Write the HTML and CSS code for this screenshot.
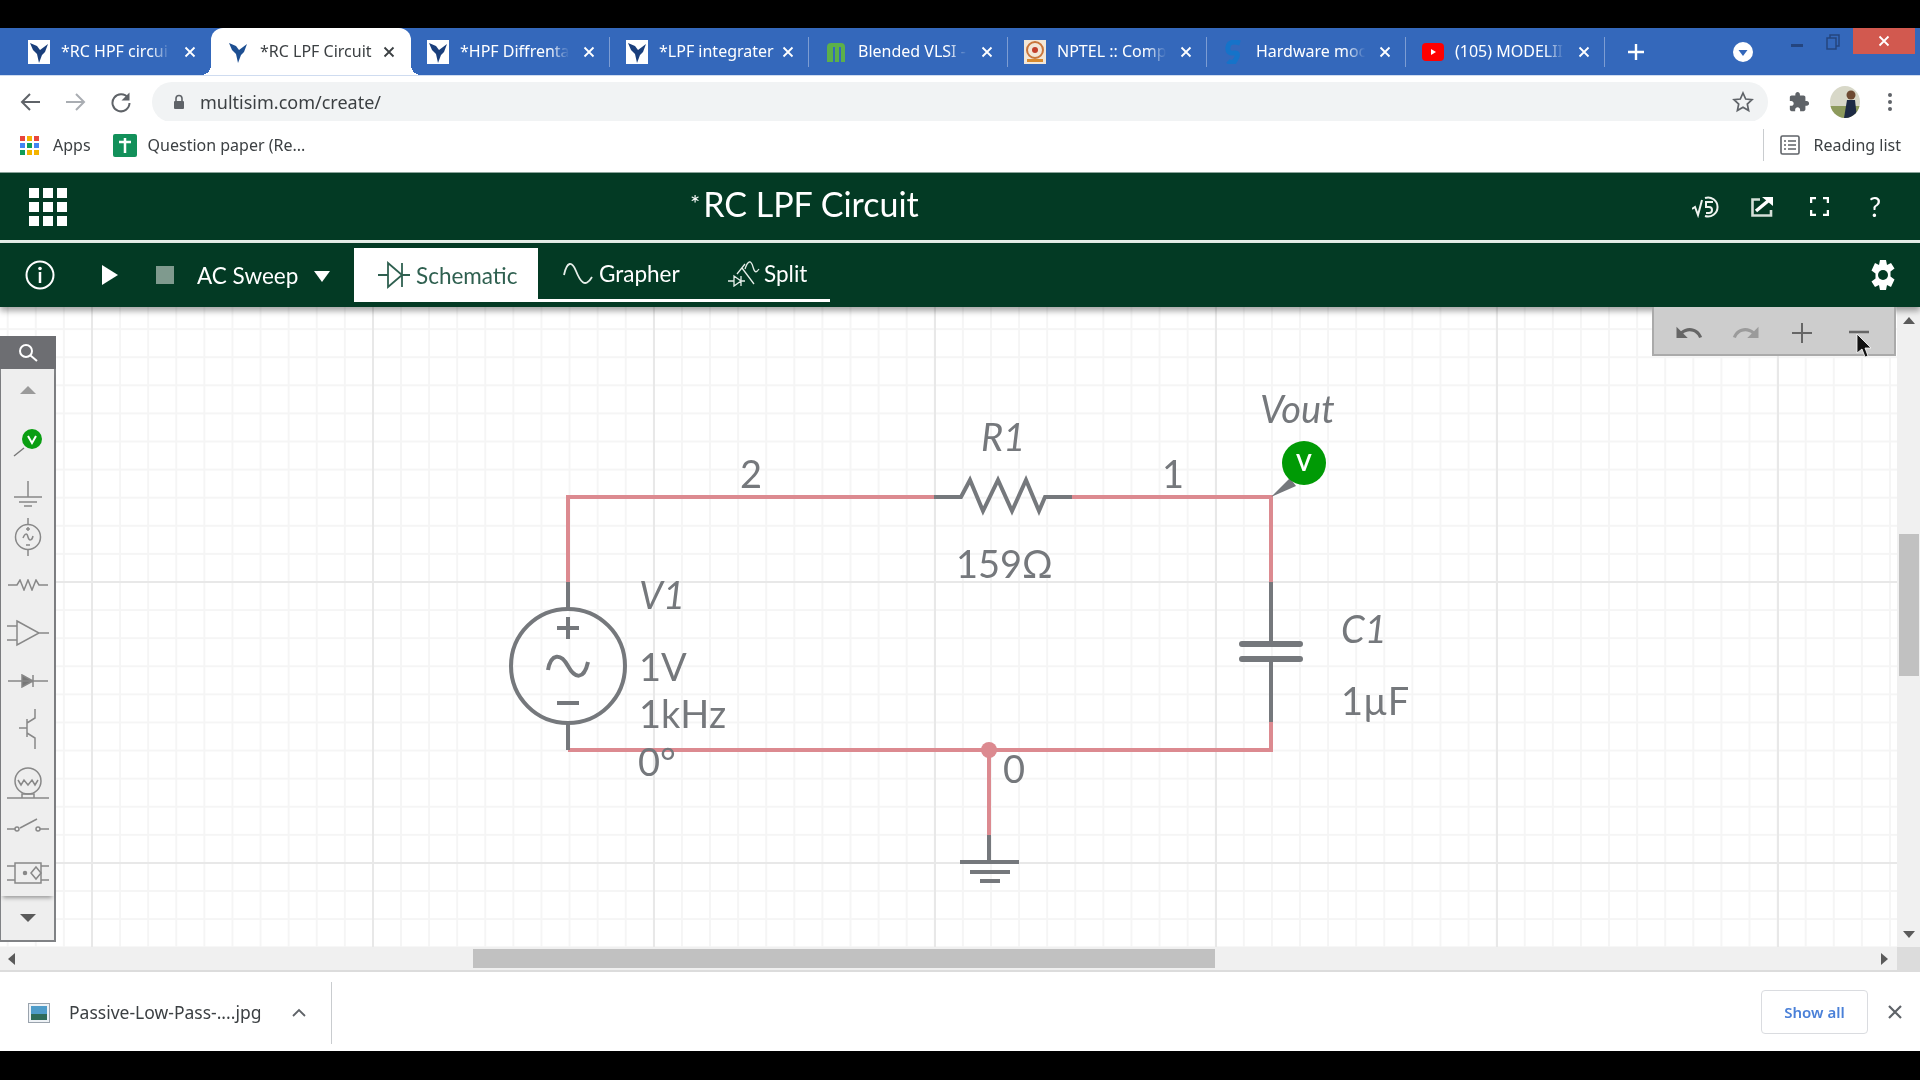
FILE: index.html
```html
<!DOCTYPE html>
<html lang="en">
<head>
  <meta charset="UTF-8" />
  <title>*RC LPF Circuit</title>
  <link rel="stylesheet" href="styles.css">
</head>
<body>
  <svg class="defs" width="0" height="0">
    <symbol id="x-mark" viewBox="0 0 12 12"><path d="M1.5 1.5l9 9M10.5 1.5l-9 9" fill="none" stroke="currentColor" stroke-width="1.8"/></symbol>
    <symbol id="ni-mark" viewBox="0 0 22 24"><path d="M2 3l7 3 3 4 8-6-3 8-3 3-3 8-2-9-4-4z" fill="currentColor"/></symbol>
  </svg>

  <div class="black-bar top"></div>

  <div class="tabstrip">
    <div class="tab">
      <span class="fav paper"><svg width="22" height="24"><use href="#ni-mark"/></svg></span>
      <span class="tab-title">*RC HPF circui</span>
      <svg class="tab-x" width="12" height="12"><use href="#x-mark"/></svg>
    </div>
    <div class="tab active">
      <span class="fav"><svg width="22" height="24"><use href="#ni-mark"/></svg></span>
      <span class="tab-title">*RC LPF Circuit</span>
      <svg class="tab-x" width="12" height="12"><use href="#x-mark"/></svg>
    </div>
    <div class="tab sep">
      <span class="fav paper"><svg width="22" height="24"><use href="#ni-mark"/></svg></span>
      <span class="tab-title">*HPF Diffrenta</span>
      <svg class="tab-x" width="12" height="12"><use href="#x-mark"/></svg>
    </div>
    <div class="tab sep">
      <span class="fav paper"><svg width="22" height="24"><use href="#ni-mark"/></svg></span>
      <span class="tab-title solid">*LPF integrater</span>
      <svg class="tab-x" width="12" height="12"><use href="#x-mark"/></svg>
    </div>
    <div class="tab sep">
      <span class="fav"><svg width="22" height="22" viewBox="0 0 22 22"><path d="M2 21V6q0-4 4-4h10q4 0 4 4v15h-4V6h-2v15h-4V6H8v15z" fill="#5cb04a"/></svg></span>
      <span class="tab-title">Blended VLSI -</span>
      <svg class="tab-x" width="12" height="12"><use href="#x-mark"/></svg>
    </div>
    <div class="tab sep">
      <span class="fav"><svg width="22" height="24" viewBox="0 0 22 24"><rect width="22" height="24" fill="#f3e7d8"/><circle cx="11" cy="10" r="8" fill="none" stroke="#c9763c" stroke-width="2"/><circle cx="11" cy="10" r="3" fill="#c2402c"/><rect x="3" y="19" width="16" height="3" fill="#d88a2e"/></svg></span>
      <span class="tab-title">NPTEL :: Comp</span>
      <svg class="tab-x" width="12" height="12"><use href="#x-mark"/></svg>
    </div>
    <div class="tab sep">
      <span class="fav"><svg width="18" height="24" viewBox="0 0 18 24"><path d="M15 3Q4 0 3 7t6 6 0 9Q5 23 3 21" fill="none" stroke="#1573c9" stroke-width="5"/></svg></span>
      <span class="tab-title">Hardware moc</span>
      <svg class="tab-x" width="12" height="12"><use href="#x-mark"/></svg>
    </div>
    <div class="tab sep">
      <span class="fav"><svg width="22" height="18" viewBox="0 0 22 18"><rect width="22" height="18" rx="4" fill="#f00"/><path d="M9 6l5 3-5 3z" fill="#fff"/></svg></span>
      <span class="tab-title">(105) MODELII</span>
      <svg class="tab-x" width="12" height="12"><use href="#x-mark"/></svg>
    </div>
    <svg class="new-tab" width="18" height="18" viewBox="0 0 18 18"><path d="M9 1v16M1 9h16" stroke="#fff" stroke-width="2.4"/></svg>
    <span class="profile-dot"><svg width="20" height="20" viewBox="0 0 20 20"><circle cx="10" cy="10" r="10" fill="#fff"/><path d="M5.5 8h9L10 14z" fill="#3367ba"/></svg></span>
    <div class="win-btns">
      <span class="win-min"></span>
      <svg width="14" height="16" viewBox="0 0 14 16"><path d="M1 4h9v11H1zM4 4V1h9v11h-3" fill="none" stroke="#24457f" stroke-width="1.5"/></svg>
      <span class="win-close"><svg width="12" height="12"><use href="#x-mark"/></svg></span>
    </div>
  </div>

  <div class="addressbar">
    <svg class="nav" width="22" height="22" viewBox="0 0 22 22"><path d="M20 11H3M10 3l-8 8 8 8" fill="none" stroke="#5f6368" stroke-width="2"/></svg>
    <svg class="nav" width="22" height="22" viewBox="0 0 22 22"><path d="M2 11h17M12 3l8 8-8 8" fill="none" stroke="#a9adb2" stroke-width="2"/></svg>
    <svg class="nav reload" width="22" height="22" viewBox="0 0 22 22"><path d="M18 7a8.5 8.5 0 1 0 1.500 5" fill="none" stroke="#5f6368" stroke-width="2"/><path d="M19.500 1.500v8h-8z" fill="#5f6368"/></svg>
    <div class="omnibox">
      <svg width="12" height="16" viewBox="0 0 12 16"><path d="M3 7V4.500a3 3 0 0 1 6 0V7" fill="none" stroke="#5f6368" stroke-width="1.600"/><rect x="1" y="7" width="10" height="8" rx="1" fill="#5f6368"/></svg>
      <span class="url">multisim.com/create/</span>
      <svg class="star" width="22" height="22" viewBox="0 0 22 22"><path d="M11 2l2.700 6 6.300.7-4.700 4.300 1.300 6.500L11 16.200 5.400 19.500l1.300-6.500L2 8.700 8.300 8z" fill="none" stroke="#5f6368" stroke-width="1.700"/></svg>
    </div>
    <svg class="puzzle" width="22" height="22" viewBox="0 0 24 24"><path d="M20.500 11H19V7c0-1.100-.9-2-2-2h-4V3.500C13 2.120 11.880 1 10.500 1S8 2.120 8 3.500V5H4c-1.100 0-2 .9-2 2v3.800h1.500c1.490 0 2.700 1.210 2.700 2.700s-1.210 2.700-2.700 2.700H2V20c0 1.100.9 2 2 2h3.800v-1.500c0-1.490 1.210-2.700 2.700-2.700s2.700 1.210 2.700 2.700V22H17c1.100 0 2-.9 2-2v-4h1.500c1.380 0 2.500-1.120 2.500-2.500S21.880 11 20.500 11z" fill="#5f6368"/></svg>
    <svg class="avatar" width="30" height="32" viewBox="0 0 30 32"><defs><clipPath id="av"><ellipse cx="15" cy="16" rx="15" ry="16"/></clipPath></defs><g clip-path="url(#av)"><rect width="30" height="32" fill="#d8d8c8"/><rect y="20" width="30" height="12" fill="#8d9a5c"/><path d="M14 32l3-18h8l2 18z" fill="#1d2a44"/><circle cx="21" cy="9" r="4.500" fill="#6e4a32"/></g></svg>
    <svg class="kebab" width="4" height="18" viewBox="0 0 4 18"><circle cx="2" cy="2" r="2" fill="#5f6368"/><circle cx="2" cy="9" r="2" fill="#5f6368"/><circle cx="2" cy="16" r="2" fill="#5f6368"/></svg>
  </div>

  <div class="bookmarks">
    <svg width="19" height="19" viewBox="0 0 19 19"><g><rect width="5" height="5" fill="#e8453c"/><rect x="7" width="5" height="5" fill="#f4b400"/><rect x="14" width="5" height="5" fill="#e8453c"/><rect y="7" width="5" height="5" fill="#4285f4"/><rect x="7" y="7" width="5" height="5" fill="#0f9d58"/><rect x="14" y="7" width="5" height="5" fill="#4285f4"/><rect y="14" width="5" height="5" fill="#0f9d58"/><rect x="7" y="14" width="5" height="5" fill="#f4b400"/><rect x="14" y="14" width="5" height="5" fill="#f4b400"/></g></svg>
    <span class="bm-text apps">Apps</span>
    <svg class="bm-paper" width="24" height="23" viewBox="0 0 24 23"><rect width="24" height="23" rx="2" fill="#12905a"/><path d="M12 4v15M6 8h12" stroke="#fff" stroke-width="2.500"/></svg>
    <span class="bm-text">Question paper (Re...</span>
    <div class="reading">
      <svg width="20" height="20" viewBox="0 0 20 20"><rect x="1" y="1" width="18" height="18" rx="1.500" fill="none" stroke="#5f6368" stroke-width="1.600"/><path d="M4 6h2M8 6h8M4 10h2M8 10h8M4 14h2M8 14h8" stroke="#5f6368" stroke-width="1.600"/></svg>
      <span class="bm-text">Reading list</span>
    </div>
  </div>

  <header class="app-head">
    <svg class="app-grid" width="38" height="38" viewBox="0 0 38 38" fill="#fff"><rect width="10" height="10"/><rect x="14" width="10" height="10"/><rect x="28" width="10" height="10"/><rect y="14" width="10" height="10"/><rect x="14" y="14" width="10" height="10"/><rect x="28" y="14" width="10" height="10"/><rect y="28" width="10" height="10"/><rect x="14" y="28" width="10" height="10"/><rect x="28" y="28" width="10" height="10"/></svg>
    <h1 class="app-title"><span class="star-mark">*</span>RC LPF Circuit</h1>
    <div class="head-icons">
      <svg class="ic-eq" width="31" height="22" viewBox="0 0 31 22" fill="none" stroke="#eef3ef" stroke-width="2"><path d="M0 13l3-2 3 8 4-15"/><path d="M13 2a9.500 9.500 0 1 1 0 18"/><path d="M21 6h-7v5h3a3 3 0 0 1 0 6h-3"/></svg>
      <svg class="ic-out" width="22" height="20" viewBox="0 0 22 20" fill="none"><path d="M9 2.500H1.500v16H20V13" stroke="#d5dfd8" stroke-width="2.600"/><path d="M5 14L17 4" stroke="#fff" stroke-width="3.500"/><path d="M11 0h11v9z" fill="#fff"/></svg>
      <svg class="ic-full" width="19" height="19" viewBox="0 0 19 19" fill="none" stroke="#fff" stroke-width="2.500"><path d="M1 6V1h5M13 1h5v5M18 13v5h-5M6 18H1v-5"/></svg>
      <span class="help">?</span>
    </div>
  </header>

  <nav class="app-tools">
    <svg class="info" width="30" height="30" viewBox="0 0 30 30"><circle cx="15" cy="15" r="13.500" fill="none" stroke="#fff" stroke-width="2"/><circle cx="15" cy="8.500" r="1.800" fill="#fff"/><path d="M15 12v11" stroke="#fff" stroke-width="2.500"/></svg>
    <svg class="play" width="16" height="20" viewBox="0 0 16 20"><path d="M0 0l16 10L0 20z" fill="#fff"/></svg>
    <span class="stop"></span>
    <span class="sweep">AC Sweep</span>
    <svg class="caret" width="16" height="11" viewBox="0 0 16 11"><path d="M0 0h16L8 11z" fill="#fff"/></svg>
    <div class="view-tabs">
      <div class="view-tab on">
        <svg width="32" height="28" viewBox="0 0 32 28" fill="none" stroke="#2f6050" stroke-width="1.800"><path d="M0 14h10M24 14h8M10 2l14 12-14 12zM24 2v24"/></svg>
        <span>Schematic</span>
      </div>
      <div class="view-tab graph">
        <svg width="30" height="26" viewBox="0 0 30 26" fill="none" stroke="#e6eee9" stroke-width="1.800"><path d="M1 14C4 0 9 0 13 10s9 18 16 6"/></svg>
        <span>Grapher</span>
      </div>
      <div class="view-tab split">
        <svg width="32" height="26" viewBox="0 0 32 26" fill="none" stroke="#e6eee9" stroke-width="1.300"><path d="M0 20h6M13 20h4M6 15l7 5-7 5zM13 15v10M9 13L17 3M14 7L26 23M17 8C20-1 23-1 25 6S29 11 31 8"/></svg>
        <span>Split</span>
      </div>
    </div>
    <svg class="gear" width="28" height="30" viewBox="0 0 28 30"><path d="M11 0h6l1 5 4-2 3.500 5.500-4 3v5l4 3L22 27l-4-2-1 5h-6l-1-5-4 2-3.500-5.500 4-3v-5l-4-3L6 3l4 2z" fill="#fff"/><circle cx="14" cy="15" r="5" fill="#033a24"/></svg>
  </nav>

  <main class="work">
    <div class="canvas">
      <svg class="schematic" width="1897" height="640" viewBox="0 307 1897 640">
        <g class="wire">
          <path d="M568 582V497H934M1072 497H1271V582M1271 722V750H568M989 750V835"/>
        </g>
        <circle cx="989" cy="750" r="8" fill="#dc8a90"/>
        <g class="part">
          <path d="M568 582V609M568 723V750"/>
          <ellipse cx="568" cy="666" rx="57" ry="57"/>
          <path d="M557 628h22M568 617v22M557 703h22"/>
          <path d="M548 670c3-17 13-17 20-4s16 14 20-4"/>
          <path d="M934 497H961L970 480 983 511 998 480 1012 511 1026 480 1039 511 1045 497H1072"/>
          <path d="M1271 582V644M1271 659V722"/>
          <path d="M989 835V862"/>
          <path d="M960 862H1019M970 872H1010M980 881H1000"/>
        </g>
        <g class="part thick">
          <path d="M1242 644H1300M1242 659H1300"/>
        </g>
        <path d="M1271 497L1290 478L1296 486z" fill="#75787c"/>
        <circle cx="1304" cy="463" r="22" fill="#009a05"/>
        <text class="probe-v" x="1304" y="471">V</text>
        <g class="label">
          <text class="it" x="1260" y="423">Vout</text>
          <text class="it" x="981" y="451">R1</text>
          <text x="740" y="488">2</text>
          <text x="1162" y="488">1</text>
          <text x="956" y="578">159Ω</text>
          <text class="it" x="639" y="609">V1</text>
          <text x="639" y="681">1V</text>
          <text x="639" y="728">1kHz</text>
          <text x="638" y="776">0°</text>
          <text x="1003" y="783">0</text>
          <text class="it" x="1341" y="643">C1</text>
          <text x="1341" y="715">1µF</text>
        </g>
      </svg>

      <aside class="palette">
        <div class="pal-search">
          <svg width="20" height="20" viewBox="0 0 20 20" fill="none" stroke="#fff" stroke-width="2"><circle cx="8" cy="8" r="6"/><path d="M12.500 12.500L19 18"/></svg>
        </div>
        <div class="pal-list">
          <div class="pal-item up"><svg width="16" height="8" viewBox="0 0 16 8"><path d="M8 0l8 8H0z" fill="#9a9a9a"/></svg></div>
          <div class="pal-item probe"><svg width="34" height="34" viewBox="0 0 34 34"><path d="M3 30l10-8" stroke="#777" stroke-width="1.500"/><ellipse cx="21" cy="13" rx="10" ry="10" fill="#0a9e12"/><path d="M17 10l4 7 4-7" fill="none" stroke="#fff" stroke-width="2"/></svg></div>
          <div class="pal-item low"><svg width="30" height="26" viewBox="0 0 30 26" fill="none" stroke="#888" stroke-width="1.500"><path d="M15 0v16M1 16h28M6 21h18M11 25h8"/></svg></div>
          <div class="pal-item"><svg width="30" height="38" viewBox="0 0 30 38" fill="none" stroke="#888" stroke-width="1.500"><path d="M15 0v7M15 31v7"/><circle cx="15" cy="19" r="12.500"/><path d="M13 11h4M15 9v4M13 27h4M10 20c2-5 4-5 5-1s4 4 5-1"/></svg></div>
          <div class="pal-item"><svg width="40" height="12" viewBox="0 0 40 12" fill="none" stroke="#888" stroke-width="1.500"><path d="M0 6h9l3-5 4 10 4-10 4 10 4-10 3 5h9"/></svg></div>
          <div class="pal-item"><svg width="42" height="28" viewBox="0 0 42 28" fill="none" stroke="#888" stroke-width="1.500"><path d="M10 2l22 12L10 26zM0 7h10M0 21h10M32 14h10"/></svg></div>
          <div class="pal-item"><svg width="40" height="14" viewBox="0 0 40 14" fill="#777" stroke="#888" stroke-width="1.500"><path d="M0 7h40M14 1l11 6-11 6zM25 1v12"/></svg></div>
          <div class="pal-item"><svg width="18" height="40" viewBox="0 0 18 40" fill="none" stroke="#888" stroke-width="1.500"><path d="M0 19h8M8 10v18M8 14l8-5V0M8 24l8 5v11"/></svg></div>
          <div class="pal-item low2"><svg width="42" height="32" viewBox="0 0 42 32" fill="none" stroke="#888" stroke-width="1.500"><circle cx="21" cy="14" r="13"/><path d="M11 13l3 5 3-5 4 5 4-5 3 5 3-5"/><path d="M0 31h42M15 27h12v4H15z"/></svg></div>
          <div class="pal-item"><svg width="42" height="14" viewBox="0 0 42 14" fill="none" stroke="#888" stroke-width="1.500"><path d="M0 11h8M13 10L30 1M33 11h9"/><circle cx="10" cy="11" r="2"/><circle cx="31" cy="11" r="2"/></svg></div>
          <div class="pal-item"><svg width="42" height="22" viewBox="0 0 42 22" fill="none" stroke="#888" stroke-width="1.500"><path d="M0 4h42M0 18h42"/><rect x="8" y="1" width="26" height="20" fill="#eee"/><circle cx="18" cy="11" r="1.500" fill="#888"/><path d="M29 5l5 6-5 6-5-6z"/></svg></div>
        </div>
        <div class="pal-down"><svg width="16" height="8" viewBox="0 0 16 8"><path d="M0 0h16L8 8z" fill="#5a5a5a"/></svg></div>
      </aside>

      <div class="zoom-panel">
        <svg width="30" height="30" viewBox="0 0 24 24"><path d="M12.500 8c-2.650 0-5.050 1-6.900 2.600L2 7v9h9l-3.620-3.620c1.390-1.160 3.160-1.880 5.120-1.880 3.540 0 6.550 2.310 7.600 5.500l2.370-.78C21.080 11.030 17.150 8 12.500 8z" fill="#666"/></svg>
        <svg class="flip" width="30" height="30" viewBox="0 0 24 24"><path d="M12.500 8c-2.650 0-5.050 1-6.900 2.600L2 7v9h9l-3.620-3.620c1.390-1.160 3.160-1.880 5.120-1.880 3.540 0 6.550 2.310 7.600 5.500l2.370-.78C21.080 11.030 17.150 8 12.500 8z" fill="#9b9b9b"/></svg>
        <svg width="20" height="20" viewBox="0 0 20 20"><path d="M10 0v20M0 10h20" stroke="#666" stroke-width="2"/></svg>
        <svg width="20" height="20" viewBox="0 0 20 20"><path d="M0 9h20" stroke="#666" stroke-width="2.500"/></svg>
      </div>
      <svg class="pointer" width="16" height="26" viewBox="0 0 16 26"><path d="M1 1v19l5-4 3 8 3-1-3-8h6z" fill="#111" stroke="#fff" stroke-width=".8"/></svg>
    </div>

    <div class="vscroll">
      <div class="arrow-box"><svg width="12" height="7" viewBox="0 0 12 7"><path d="M6 0l6 7H0z" fill="#5a5a5a"/></svg></div>
      <div class="vthumb"></div>
      <div class="arrow-box end"><svg width="12" height="7" viewBox="0 0 12 7"><path d="M0 0h12L6 7z" fill="#5a5a5a"/></svg></div>
    </div>
  </main>

  <div class="hscroll">
    <div class="h-arrow"><svg width="7" height="12" viewBox="0 0 7 12"><path d="M7 0v12L0 6z" fill="#5a5a5a"/></svg></div>
    <div class="hthumb"></div>
    <div class="h-arrow right"><svg width="7" height="12" viewBox="0 0 7 12"><path d="M0 0v12l7-6z" fill="#5a5a5a"/></svg></div>
    <div class="corner"></div>
  </div>

  <footer class="downloads">
    <div class="dl-item">
      <svg width="22" height="20" viewBox="0 0 22 20"><rect x=".5" y=".5" width="21" height="19" fill="#eef2f6" stroke="#9aa3ad"/><rect x="3" y="3" width="16" height="8" fill="#4f9cc9"/><rect x="3" y="11" width="16" height="6" fill="#2f6b58"/></svg>
      <span class="dl-name">Passive-Low-Pass-....jpg</span>
      <svg class="dl-caret" width="14" height="9" viewBox="0 0 14 9"><path d="M1 8l6-6 6 6" fill="none" stroke="#5f6368" stroke-width="1.800"/></svg>
    </div>
    <button class="show-all">Show all</button>
    <svg class="dl-close" width="14" height="14" viewBox="0 0 14 14"><path d="M1 1l12 12M13 1L1 13" stroke="#5f6368" stroke-width="2.200"/></svg>
  </footer>

  <div class="black-bar bottom"></div>
</body>
</html>
```

FILE: styles.css
```css
* {
  box-sizing: border-box;
}
html, body {
  margin: 0;
  height: 1080px;
  overflow: hidden;
  background: #000;
}
body {
  display: flex;
  flex-direction: column;
  font-family: "Noto Sans", Arial, sans-serif;
  filter: blur(.4px);
}
svg {
  display: block;
  flex: none;
}
.defs {
  position: absolute;
}
.black-bar.top {
  height: 28px;
}
.black-bar.bottom {
  height: 29px;
}

/* browser tabs */
.tabstrip {
  height: 47px;
  background: #3468bb;
  display: flex;
  align-items: center;
  padding-left: 12px;
  color: #fff;
}
.tab {
  position: relative;
  width: 199px;
  height: 47px;
  display: flex;
  align-items: center;
}
.tab.sep::after {
  content: "";
  position: absolute;
  right: 0;
  top: 9px;
  height: 30px;
  width: 1px;
  background: #7d9dd3;
}
.tab.active {
  width: 200px;
  background: #fff;
  color: #3c4043;
  border-radius: 12px 12px 0 0;
}
.tab.active::before, .tab.active::after {
  content: "";
  position: absolute;
  bottom: 0;
  width: 10px;
  height: 10px;
}
.tab.active::before {
  left: -10px;
  background: radial-gradient(circle at 0 0, transparent 10px, #fff 10px);
}
.tab.active::after {
  right: -10px;
  background: radial-gradient(circle at 100% 0, transparent 10px, #fff 10px);
}
.fav {
  width: 24px;
  margin-left: 15px;
  display: flex;
  justify-content: center;
  color: #1a3f7c;
}
.tab.active .fav {
  color: #1d4f92;
}
.fav.paper svg {
  background: #fff;
}
.tab-title {
  width: 115px;
  margin: -2px 0 0 10px;
  font-size: 16px;
  white-space: nowrap;
  -webkit-mask-image: linear-gradient(to right, #000 78%, transparent 95%);
  mask-image: linear-gradient(to right, #000 78%, transparent 95%);
}
.tab.active .tab-title, .tab-title.solid {
  -webkit-mask-image: none;
  mask-image: none;
}
.tab-x {
  margin-left: 8px;
}
.new-tab {
  margin-left: 22px;
}
.profile-dot {
  margin-left: 88px;
}
.win-btns {
  margin-left: auto;
  align-self: flex-start;
  display: flex;
  align-items: flex-start;
}
.win-min {
  width: 12px;
  height: 3px;
  margin: 16px 23px 0 0;
  background: #24457f;
}
.win-btns svg {
  margin-top: 6px;
}
.win-close {
  width: 62px;
  height: 26px;
  margin: 0 5px 0 13px;
  background: #d2594f;
  display: flex;
  align-items: center;
  justify-content: center;
}
.win-close svg {
  margin: 0;
}

/* address bar */
.addressbar {
  height: 46px;
  background: #fff;
  display: flex;
  align-items: center;
  padding: 6px 0 0 20px;
  border-top: 1px solid #cfdcf0;
}
.nav {
  margin-right: 22px;
}
.nav.reload {
  margin-left: 2px;
}
.omnibox {
  width: 1616px;
  height: 40px;
  margin-left: -2px;
  border-radius: 20px;
  background: #f1f3f4;
  display: flex;
  align-items: center;
  padding-left: 21px;
}
.url {
  margin-left: 15px;
  font-size: 18px;
  color: #3c4043;
}
.star {
  margin-left: auto;
  margin-right: 14px;
}
.puzzle {
  margin-left: 20px;
}
.avatar {
  margin-left: 20px;
}
.kebab {
  margin-left: 28px;
}

/* bookmarks */
.bookmarks {
  height: 51px;
  background: #fff;
  display: flex;
  align-items: center;
  padding: 0 0 3px 20px;
}
.bm-text {
  font-size: 16px;
  color: #3c4043;
  white-space: nowrap;
}
.apps {
  margin-left: 14px;
}
.bm-paper {
  margin: 0 11px 0 22px;
}
.reading {
  margin-left: auto;
  height: 32px;
  padding: 0 19px 0 16px;
  border-left: 1px solid #c9cccf;
  display: flex;
  align-items: center;
  gap: 13px;
}

/* multisim header */
.app-head {
  height: 71px;
  background: #033a24;
  border-top: 1px solid #8aa39a;
  border-bottom: 3px solid #e6efe9;
  color: #fff;
  display: flex;
  align-items: center;
  padding-left: 29px;
}
.app-title {
  margin: 0 0 6px 623px;
  font: 400 34px Lato, sans-serif;
  white-space: nowrap;
}
.star-mark {
  font-size: 24px;
  margin-right: 3px;
  vertical-align: 5px;
}
.head-icons {
  margin-left: auto;
  padding-right: 39px;
  display: flex;
  align-items: center;
}
.ic-out {
  margin-left: 28px;
}
.ic-full {
  margin-left: 37px;
}
.help {
  margin-left: 40px;
  font: 400 27px Lato, sans-serif;
}

.app-tools {
  height: 64px;
  background: #033a24;
  color: #fff;
  display: flex;
  align-items: center;
  padding-left: 25px;
  box-shadow: 0 4px 6px rgba(0, 0, 0, .35);
  position: relative;
  z-index: 2;
}
.play {
  margin-left: 47px;
}
.stop {
  width: 18px;
  height: 18px;
  margin-left: 38px;
  background: #7f9a8e;
}
.sweep {
  width: 109px;
  margin-left: 23px;
  font: 400 22.5px Lato, sans-serif;
  white-space: nowrap;
}
.caret {
  margin: 3px 0 0 8px;
}
.view-tabs {
  margin: 5px 0 0 24px;
  width: 476px;
  height: 54px;
  align-self: flex-start;
  border-bottom: 3px solid #fff;
  display: flex;
}
.view-tab {
  height: 51px;
  display: flex;
  align-items: center;
  font: 400 22.5px Lato, sans-serif;
  white-space: nowrap;
}
.view-tab.on {
  width: 184px;
  height: 54px;
  padding-left: 24px;
  gap: 6px;
  background: #fff;
  color: #2f6050;
}
.view-tab.graph {
  width: 165px;
  padding-left: 25px;
  gap: 6px;
}
.view-tab.split {
  padding-left: 25px;
  gap: 4px;
}
.gear {
  margin-left: auto;
  margin-right: 23px;
}

/* canvas */
.work {
  height: 640px;
  display: flex;
}
.canvas {
  position: relative;
  flex: 1;
  overflow: hidden;
  background-color: #fff;
  background-image:
    linear-gradient(to right, #e8e8e8 2px, transparent 2px),
    linear-gradient(to bottom, #e8e8e8 2px, transparent 2px),
    linear-gradient(to right, #f5f5f5 2px, transparent 2px),
    linear-gradient(to bottom, #f5f5f5 2px, transparent 2px);
  background-size: 281px 281px, 281px 281px, 28.1px 28.1px, 28.1px 28.1px;
  background-position: 91px 0, 0 274px, 91px 0, 0 274px;
}
.schematic {
  position: absolute;
  left: 0;
  top: 0;
}
.wire path {
  fill: none;
  stroke: #dc8a90;
  stroke-width: 4;
}
.part path, .part ellipse {
  fill: none;
  stroke: #75787c;
  stroke-width: 4;
}
.part.thick path {
  stroke-width: 6;
  stroke-linecap: round;
}
.label text {
  font: 400 38px Lato, sans-serif;
  fill: #75787c;
}
.label text.it {
  font-style: italic;
}
.probe-v {
  font: 700 22px Lato, sans-serif;
  fill: #fff;
  text-anchor: middle;
}

/* component palette */
.palette {
  position: absolute;
  left: 0;
  top: 29px;
  width: 56px;
  height: 606px;
  background: #eee;
  border: 2px solid #808285;
  border-left-width: 1px;
  display: flex;
  flex-direction: column;
}
.pal-search {
  height: 33px;
  margin: -2px -2px 0 -1px;
  background: #6d6e72;
  display: flex;
  align-items: center;
  justify-content: center;
}
.pal-list {
  height: 527px;
  box-shadow: 0 4px 4px -2px rgba(0, 0, 0, .35);
}
.pal-item {
  height: 48px;
  display: flex;
  align-items: center;
  justify-content: center;
}
.pal-item.up {
  padding-bottom: 6px;
}
.pal-item.probe {
  padding-top: 3px;
}
.pal-item.low {
  padding-top: 10px;
}
.pal-item.low2 {
  padding-top: 12px;
}
.pal-down {
  flex: 1;
  display: flex;
  align-items: center;
  justify-content: center;
}
.zoom-panel {
  position: absolute;
  right: 1px;
  top: 0;
  width: 244px;
  height: 49px;
  background: #cdcdcd;
  border: 2px solid #aaa;
  border-top: 0;
  display: grid;
  grid-template-columns: repeat(4, 56.5px);
  justify-items: center;
  align-items: center;
  padding: 5px 0 0 7px;
  z-index: 3;
}
.flip {
  transform: scaleX(-1);
}
.pointer {
  position: absolute;
  left: 1856px;
  top: 26px;
  z-index: 4;
}

/* scrollbars */
.vscroll {
  width: 23px;
  background: #f0f0f0;
  display: flex;
  flex-direction: column;
}
.arrow-box {
  height: 26px;
  display: flex;
  align-items: center;
  justify-content: center;
}
.arrow-box.end {
  margin-top: auto;
}
.vthumb {
  height: 142px;
  margin: 201px 1px 0 2px;
  background: #c1c1c1;
}
.hscroll {
  height: 25px;
  background: #f0f0f0;
  display: flex;
  border-bottom: 2px solid #dcdcdc;
}
.h-arrow {
  width: 22px;
  display: flex;
  align-items: center;
  justify-content: center;
}
.h-arrow.right {
  width: 26px;
  margin-left: auto;
}
.hthumb {
  width: 742px;
  height: 19px;
  margin: 2px 0 0 451px;
  background: #c1c1c1;
}
.corner {
  width: 23px;
  background: #dcdcdc;
}

/* download shelf */
.downloads {
  height: 79px;
  background: #fff;
  display: flex;
  align-items: center;
  padding-left: 28px;
}
.dl-item {
  width: 304px;
  height: 62px;
  margin-top: 2px;
  border-right: 1px solid #c9cccf;
  display: flex;
  align-items: center;
}
.dl-name {
  width: 191px;
  margin: -2px 0 0 19px;
  font-size: 17.5px;
  color: #3c4043;
  white-space: nowrap;
}
.dl-caret {
  margin-left: 32px;
}
.show-all {
  margin-left: auto;
  width: 107px;
  height: 44px;
  background: #fff;
  border: 1px solid #dadce0;
  border-radius: 4px;
  font: 600 15px "Noto Sans", Arial, sans-serif;
  color: #4a80d8;
}
.dl-close {
  margin: 0 18px 0 20px;
}
```
